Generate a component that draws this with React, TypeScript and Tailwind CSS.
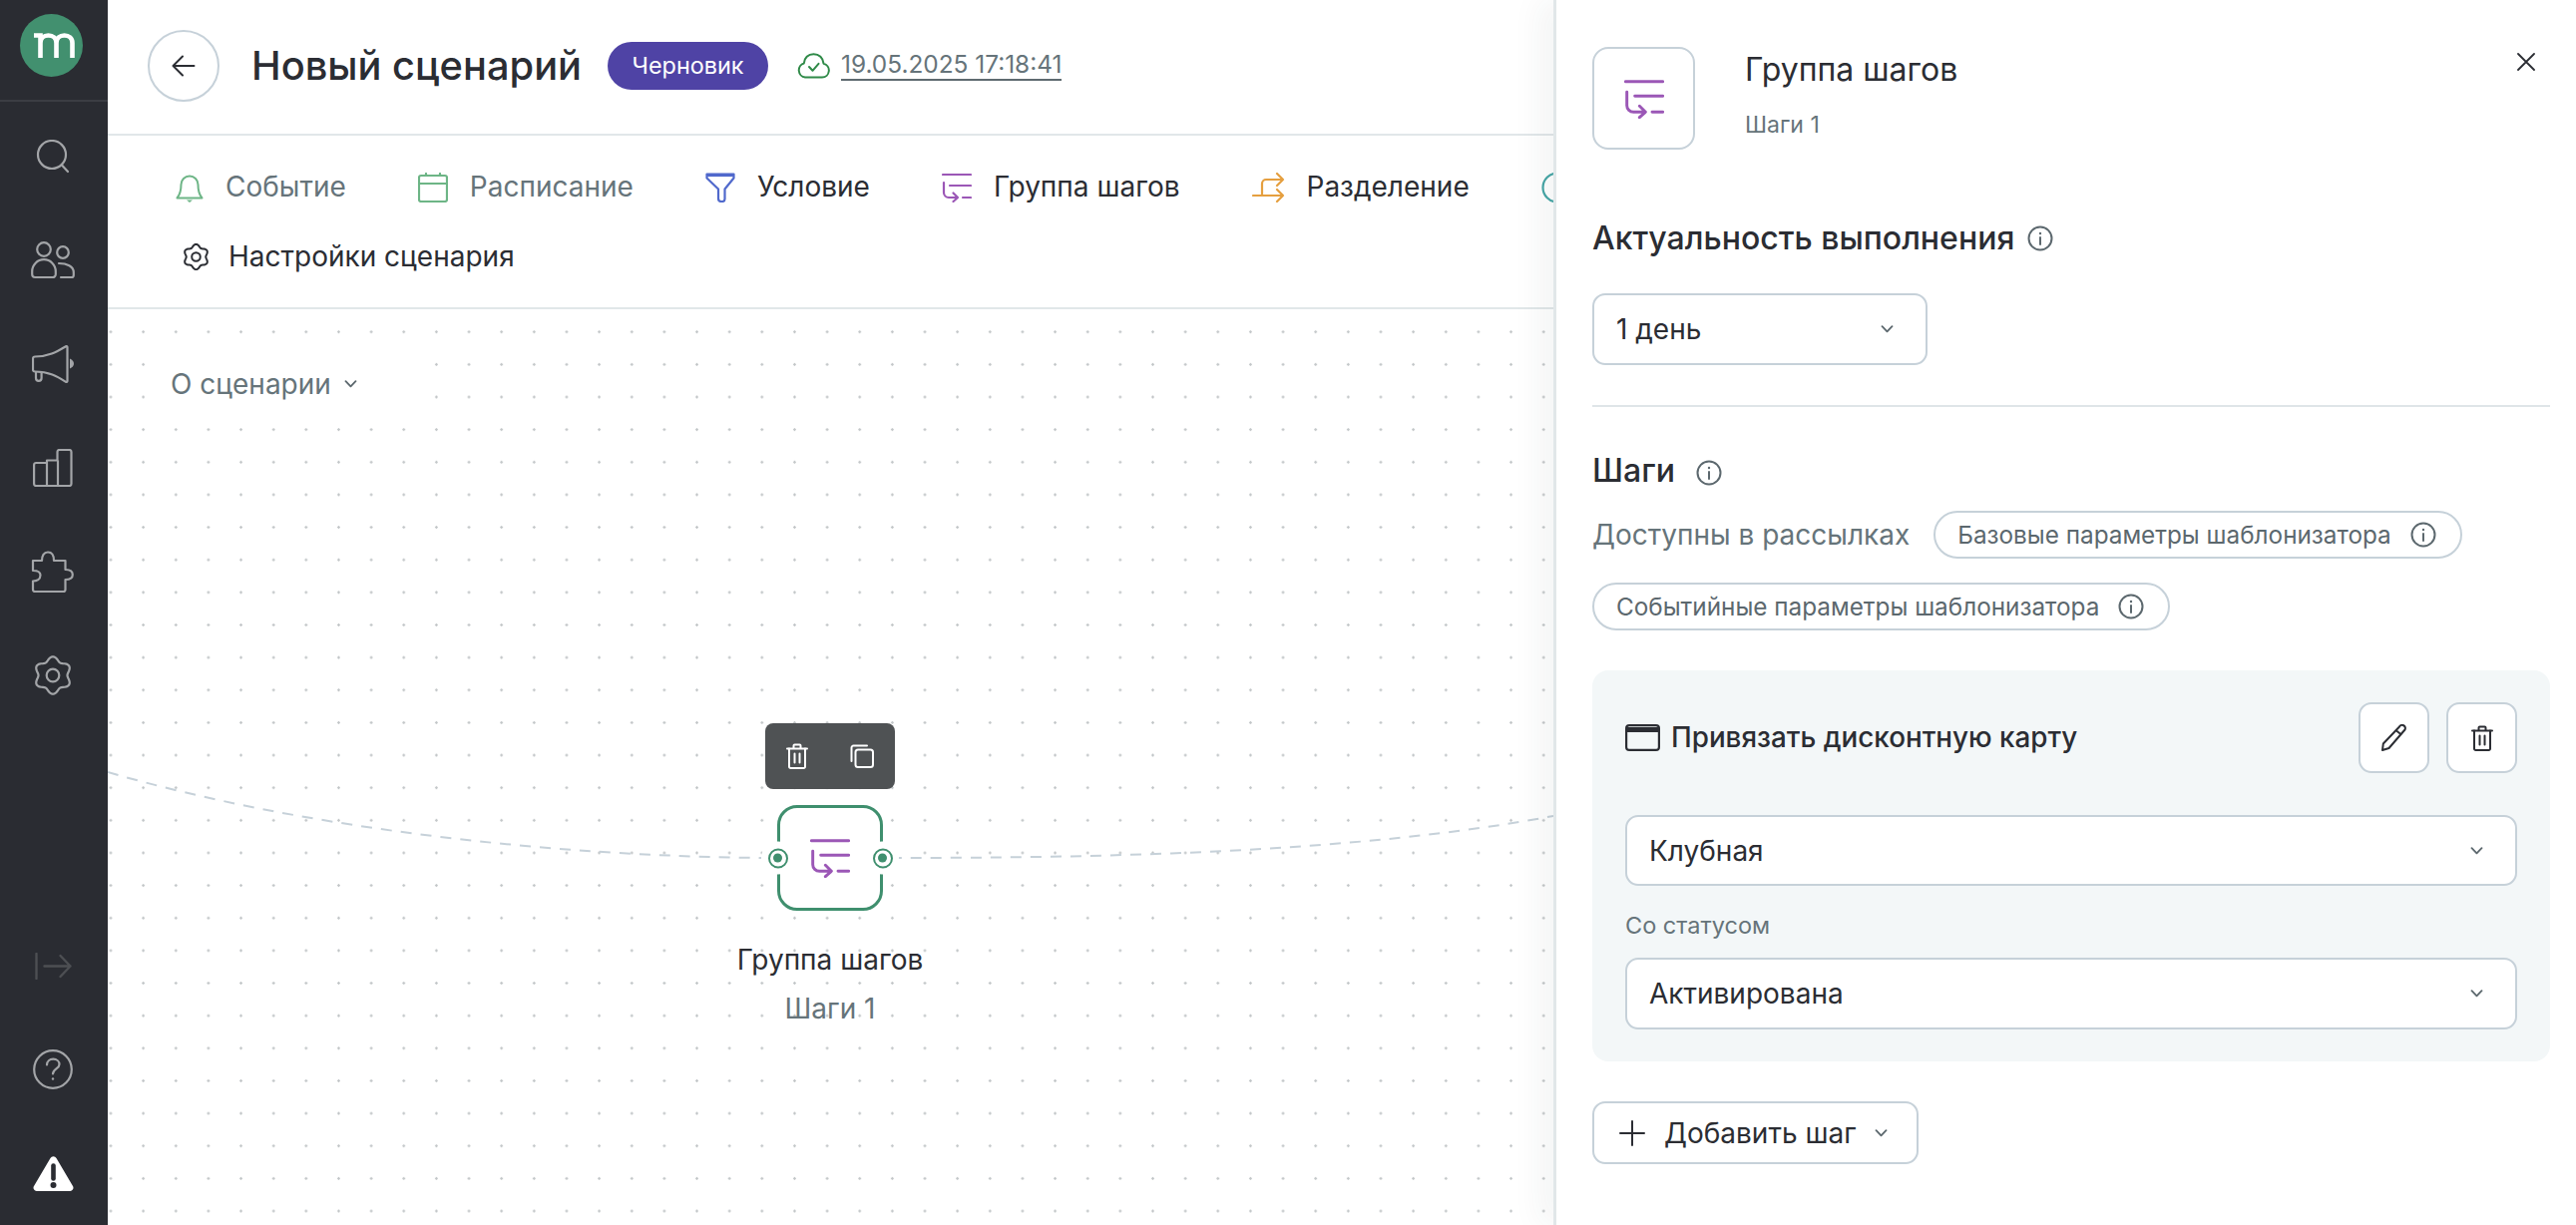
import type { ReactNode } from "react";

function gearPath(r: number, c: number, depth = 0.13) {
  let d = "";
  for (let i = 0; i < 72; i++) {
    const t = (i / 72) * Math.PI * 2;
    const rr = r * (1 + depth * Math.cos(6 * t));
    const x = c + rr * Math.sin(t);
    const y = c - rr * Math.cos(t);
    d += `${i === 0 ? "M" : "L"}${x.toFixed(2)} ${y.toFixed(2)}`;
  }
  return d + "Z";
}

function Gear({ size, sw, className }: { size: number; sw: number; className: string }) {
  return (
    <svg width={size} height={size} viewBox="0 0 38 38" fill="none" stroke="currentColor" strokeWidth={sw} className={className}>
      <path d={gearPath(15.8, 19)} strokeLinejoin="round" />
      <circle cx="19" cy="19" r="6" />
    </svg>
  );
}

function GroupIcon({ size }: { size: number }) {
  return (
    <svg width={size} height={size} viewBox="0 0 30 30" fill="none" stroke="#9b57b6" strokeWidth="2.2" strokeLinecap="round" strokeLinejoin="round">
      <path d="M1 2h28M8 13h21M21 25h8" />
      <path d="M2 10v10a5 5 0 0 0 5 5h9M11.5 20.5 16 25l-4.5 4" />
    </svg>
  );
}

function Info({ className = "" }: { className?: string }) {
  return (
    <svg width="26" height="26" viewBox="0 0 26 26" fill="none" stroke="#5c686e" strokeWidth="2" className={"shrink-0 " + className}>
      <circle cx="13" cy="13" r="11.5" />
      <path d="M13 12v7" strokeLinecap="round" />
      <circle cx="13" cy="8" r="1.2" fill="#5c686e" stroke="none" />
    </svg>
  );
}

function Chevron({ className = "" }: { className?: string }) {
  return (
    <svg width="13" height="8" viewBox="0 0 13 8" fill="none" stroke="#5c686e" strokeWidth="1.8" strokeLinecap="round" strokeLinejoin="round" className={"shrink-0 " + className}>
      <path d="M1.5 1.2 6.5 6.4l5-5.2" />
    </svg>
  );
}

function Trash({ color }: { color: string }) {
  return (
    <svg width="22" height="26" viewBox="0 0 22 26" fill="none" stroke={color} strokeWidth="2" strokeLinecap="round" strokeLinejoin="round">
      <path d="M1 5.5h20M7.5 5V2.5a1 1 0 0 1 1-1h5a1 1 0 0 1 1 1V5" />
      <path d="M3 5.5v18a1.5 1.5 0 0 0 1.5 1.5h13a1.5 1.5 0 0 0 1.5-1.5v-18M8.5 10.5v9M13.5 10.5v9" />
    </svg>
  );
}

function SidebarSlot({ children }: { children: ReactNode }) {
  return <div className="flex h-[104px] w-full shrink-0 items-center justify-center pr-[2px] text-[#a3a5a8]">{children}</div>;
}

function Sidebar() {
  return (
    <aside className="flex h-full w-[108px] shrink-0 flex-col bg-[#2a2c32]">
      <div className="flex h-[102px] shrink-0 items-start justify-center border-b-2 border-[#3b3d43] pr-[5px] pt-[14px]">
        <svg width="63" height="63" viewBox="0 0 63 63" fill="none">
          <circle cx="31.5" cy="31.5" r="31.5" fill="#42906f" />
          <path d="M14 21.5h6.5V44M20.5 29c0-4.5 3.5-7.5 8-7.5s8 3 8 7.500v15M36.5 29c0-4.5 3.5-7.5 8-7.5s8 3 8 7.500v15" stroke="#fff" strokeWidth="4.6" />
        </svg>
      </div>
      <div className="pt-[3px]">
        <SidebarSlot>
          <svg width="34" height="34" viewBox="0 0 34 34" fill="none" stroke="currentColor" strokeWidth="2.2" strokeLinecap="round">
            <circle cx="16" cy="15" r="14" />
            <path d="M26 25.5 32 32" />
          </svg>
        </SidebarSlot>
        <SidebarSlot>
          <svg width="44" height="38" viewBox="0 0 44 38" fill="none" stroke="currentColor" strokeWidth="2.2" strokeLinejoin="round" strokeLinecap="round">
            <circle cx="13" cy="8" r="6.8" />
            <circle cx="32" cy="11" r="5.8" />
            <path d="M1.2 33v-3a11.8 11.8 0 0 1 23.6 0v3a3 3 0 0 1-3 3H4.2a3 3 0 0 1-3-3Z" />
            <path d="M28 22c8 0 14.8 3 14.8 9v3a2 2 0 0 1-2 2H30" />
          </svg>
        </SidebarSlot>
        <SidebarSlot>
          <svg width="43" height="38" viewBox="0 0 43 38" fill="none" stroke="currentColor" strokeWidth="2.2" strokeLinejoin="round" strokeLinecap="round">
            <path d="M3 11.5c14 0 22-5 31-10.3a1 1 0 0 1 1.5.9v33.800a1 1 0 0 1-1.5.9C25 31 17 26.500 3 26.500a2 2 0 0 1-2-2v-11a2 2 0 0 1 2-2Z" />
            <path d="M4 27v6a2.8 2.8 0 0 0 5.600 0v-5" />
            <path d="M38 13.5c2.500 1 4 3 4 5s-1.500 4-4 5Z" fill="currentColor" stroke="none" />
          </svg>
        </SidebarSlot>
        <SidebarSlot>
          <svg width="40" height="38" viewBox="0 0 40 38" fill="none" stroke="currentColor" strokeWidth="2.2" strokeLinejoin="round">
            <path d="M1.1 35V16a2 2 0 0 1 2-2H14v-2.500h10.500V3a2 2 0 0 1 2-2h10a2 2 0 0 1 2 2v32a2 2 0 0 1-2 2H3.100a2 2 0 0 1-2-2ZM14 14v23M25 11.500V37" />
          </svg>
        </SidebarSlot>
        <SidebarSlot>
          <svg width="44" height="43" viewBox="0 0 44 43" fill="none" stroke="currentColor" strokeWidth="2.2" strokeLinejoin="round">
            <path d="M2 10h9c0-5 2-8.500 6-8.500s6 3.500 6 8.500h11.500v9c4 0 7.300 1 7.300 5s-3.300 5-7.300 5v10a2 2 0 0 1-2 2H4a2 2 0 0 1-2-2v-8.500c4 0 7.500-2 7.500-6S6 20 2 20Z" />
          </svg>
        </SidebarSlot>
        <SidebarSlot>
          <Gear size={40} sw={2.1} className="" />
        </SidebarSlot>
      </div>
      <div className="mt-auto">
        <SidebarSlot>
          <svg width="37" height="27" viewBox="0 0 37 27" fill="none" stroke="#4d4f53" strokeWidth="2.4" strokeLinecap="round" strokeLinejoin="round">
            <path d="M1.5 1v25M9.5 13.5h26M25.5 3l10 10.5L25.5 24" />
          </svg>
        </SidebarSlot>
        <SidebarSlot>
          <svg width="40" height="40" viewBox="0 0 40 40" fill="none" stroke="currentColor" strokeWidth="2.2" strokeLinecap="round">
            <circle cx="20" cy="20" r="18.8" />
            <path d="M14 15.500c0-3.500 2.800-5.800 6.300-5.800s6.200 2.300 6.200 5.300c0 4.500-6.500 4.500-6.500 9.500" />
            <circle cx="20" cy="29.500" r="1.2" fill="currentColor" stroke="none" />
          </svg>
        </SidebarSlot>
        <SidebarSlot>
          <svg width="41" height="35" viewBox="0 0 41 35" fill="none">
            <path d="M17.500 2 1 30a3.300 3.300 0 0 0 2.800 5h33.400a3.300 3.300 0 0 0 2.800-5L23.500 2a3.500 3.500 0 0 0-6 0Z" fill="#fff" />
            <path d="M20.500 9.500v13" stroke="#2a2c32" strokeWidth="4.6" strokeLinecap="round" />
            <circle cx="20.500" cy="29" r="3" fill="#2a2c32" />
          </svg>
        </SidebarSlot>
      </div>
    </aside>
  );
}

function TopBar() {
  return (
    <header className="flex h-[136px] shrink-0 items-center border-b-2 border-[#e1e7e9] pb-[3px] pl-[40px]">
      <button className="flex h-[72px] w-[72px] shrink-0 items-center justify-center rounded-full border-2 border-[#c6d1d9] bg-white">
        <svg width="24" height="22" viewBox="0 0 24 22" fill="none" stroke="#2b2d33" strokeWidth="2" strokeLinecap="round" strokeLinejoin="round">
          <path d="M22.5 11h-21M11 1.500 1.500 11l9.500 9.500" />
        </svg>
      </button>
      <h1 className="ml-[32px] whitespace-nowrap text-[39.8px] font-medium leading-none text-[#2b2d33]">Новый сценарий</h1>
      <span className="ml-[26px] flex h-[48px] w-[161px] shrink-0 items-center justify-center rounded-full bg-[#4f43a5] text-[23.4px] font-normal text-white">Черновик</span>
      <svg width="33" height="26" viewBox="0 0 33 26" fill="none" stroke="#2f8a48" strokeWidth="2" strokeLinejoin="round" strokeLinecap="round" className="ml-[29px] shrink-0">
        <path d="M8 24.500h17a7 7 0 0 0 1.500-13.800C26 5 22 1.200 16.500 1.200S7.200 5 6.800 10.500A7.200 7.200 0 0 0 8 24.500Z" />
        <path d="m12 14 3.500 3.800 6-7" />
      </svg>
      <span className="ml-[11px] border-b-2 border-[#5f6b70] pb-[1px] text-[24.4px] leading-[28px] text-[#66747a]">19.05.2025 17:18:41</span>
    </header>
  );
}

function Tab({ icon, label, muted }: { icon: ReactNode; label: string; muted?: boolean }) {
  return (
    <div className={"flex h-[30px] shrink-0 items-center gap-[22px] whitespace-nowrap text-[28px] " + (muted ? "text-[#66747a]" : "text-[#2b2d33]")}>
      {icon}
      <span className="-mt-[2px]">{label}</span>
    </div>
  );
}

function Toolbox() {
  return (
    <div className="h-[174px] shrink-0 border-b-2 border-[#e1e7e9] pl-[68px] pt-[36px]">
      <div className="flex items-center gap-[72px]">
        <Tab
          muted
          label="Событие"
          icon={
            <svg width="28" height="30" viewBox="0 0 28 30" fill="none" stroke="#6db586" strokeWidth="2" strokeLinejoin="round">
              <path d="M1.500 25.500c3.500-4 4-8 4-13.500a8.500 8.500 0 0 1 17 0c0 5.500.5 9.500 4 13.500Z" />
              <path d="M11 27.500h6l-3 2.500Z" fill="#6db586" stroke="none" />
            </svg>
          }
        />
        <Tab
          muted
          label="Расписание"
          icon={
            <svg width="30" height="30" viewBox="0 0 30 30" fill="none" stroke="#6db586" strokeWidth="2.2" strokeLinecap="round">
              <rect x="1" y="3" width="28" height="26" rx="2" />
              <path d="M1 11h28M8 1v2M22 1v2" />
            </svg>
          }
        />
        <Tab
          label="Условие"
          icon={
            <svg width="30" height="30" viewBox="0 0 30 30" fill="none" stroke="#5069cc" strokeWidth="2.2" strokeLinejoin="round">
              <path d="M1.500 1.500h27v4L19.500 16.500V26.500a2.500 2.500 0 0 1-2.500 2.500h-1a3 3 0 0 1-3-3V16.500L1.500 5.500Z" />
              <path d="M1.500 3h27" />
            </svg>
          }
        />
        <Tab label="Группа шагов" icon={<GroupIcon size={30} />} />
        <Tab
          label="Разделение"
          icon={
            <svg width="33" height="30" viewBox="0 0 33 30" fill="none" stroke="#e59f3f" strokeWidth="2.2" strokeLinecap="round" strokeLinejoin="round">
              <path d="M1 23h30M25 17l6 6-6 6" />
              <path d="M10 23V11a4 4 0 0 1 4-4h17M25 1l6 6-6 6" />
            </svg>
          }
        />
        <svg width="32" height="32" viewBox="0 0 32 32" fill="none" stroke="#46a6a6" strokeWidth="2.2" className="shrink-0">
          <circle cx="16" cy="16" r="14.500" />
        </svg>
      </div>
      <div className="ml-[7px] mt-[38px]">
        <div className="flex h-[30px] items-center gap-[19px] whitespace-nowrap text-[28px] text-[#2b2d33]">
          <Gear size={27} sw={2.8} className="text-[#2b2d33]" />
          <span>Настройки сценария</span>
        </div>
      </div>
    </div>
  );
}

function Port({ side }: { side: "left" | "right" }) {
  return (
    <span className={"absolute top-1/2 flex h-[33px] w-[33px] -translate-y-1/2 items-center justify-center rounded-full bg-white " + (side === "left" ? "left-[-19px]" : "right-[-19px]")}>
      <span className="flex h-[20px] w-[20px] items-center justify-center rounded-full border-2 border-[#3f8f6e] bg-white">
        <span className="h-[9px] w-[9px] rounded-full bg-[#3f8f6e]" />
      </span>
    </span>
  );
}

function Canvas() {
  return (
    <div className="relative min-h-0 flex-1 overflow-hidden bg-white bg-[radial-gradient(circle,#c2c6c8_1px,transparent_1.5px)] bg-[length:32.65px_32.65px] bg-[position:-13.33px_6.4px]">
      <svg className="absolute inset-0" width="1449" height="918" fill="none" stroke="#c6d1d9" strokeWidth="2" strokeDasharray="11 9">
        <path d="M0 464C200 522 450 548 655 550" />
        <path d="M785 550C1000 550 1250 545 1449 508" />
      </svg>

      <button className="absolute left-[42px] top-[35px] flex h-[80px] w-[280px] items-center gap-[13px] bg-white pl-[21px] text-[28px] text-[#66747a]">
        О сценарии
        <Chevron />
      </button>

      <div className="absolute left-[574px] top-[415px] flex w-[300px] flex-col items-center">
        <div className="flex h-[66px] w-[130px] items-center justify-between rounded-[8px] bg-[#4f5254] px-[21px]">
          <Trash color="#fff" />
          <svg width="24" height="24" viewBox="0 0 24 24" fill="none" stroke="#fff" strokeWidth="2" strokeLinejoin="round" strokeLinecap="round">
            <rect x="5.500" y="5.500" width="17.500" height="17.500" rx="2.500" />
            <path d="M1.500 17V3.500a2 2 0 0 1 2-2H17" />
          </svg>
        </div>
        <div className="relative mt-[16px] flex h-[106px] w-[106px] items-center justify-center rounded-[20px] border-[3px] border-[#3f8f6e] bg-white">
          <Port side="left" />
          <GroupIcon size={40} />
          <Port side="right" />
        </div>
        <div className="mt-[31px] text-[28px] leading-[36px] text-[#2b2d33]">Группа шагов</div>
        <div className="mt-[13px] text-[28px] leading-[36px] text-[#66747a]">Шаги 1</div>
      </div>
    </div>
  );
}

function Select({ label, className }: { label: string; className: string }) {
  return (
    <div className={"flex shrink-0 items-center justify-between rounded-[13px] border-2 border-[#c6d1d9] bg-white pl-[22px] pr-[32px] text-[28px] text-[#2b2d33] " + className}>
      <span>{label}</span>
      <Chevron />
    </div>
  );
}

function Chip({ label }: { label: string }) {
  return (
    <span className="flex h-[48px] items-center gap-[19px] whitespace-nowrap rounded-full border-2 border-[#c6d1d9] pl-[22px] pr-[24px] text-[24.3px] text-[#5c686e]">
      {label}
      <Info />
    </span>
  );
}

function SquareButton({ children }: { children: ReactNode }) {
  return <button className="flex h-[71px] w-[71px] items-center justify-center rounded-[13px] border-2 border-[#c6d1d9] bg-white">{children}</button>;
}

function Panel() {
  return (
    <aside className="relative z-10 h-full w-[1025px] shrink-0 border-l-[3px] border-[#e1e7e9] bg-white pl-[36px] pr-[26px] pt-[47px] shadow-[-14px_0_28px_rgba(40,50,60,0.05)]">
      <div className="flex">
        <div className="flex h-[103px] w-[103px] shrink-0 items-center justify-center rounded-[16px] border-2 border-[#c6d1d9]">
          <GroupIcon size={40} />
        </div>
        <div className="ml-[50px] pt-[3px]">
          <div className="text-[32px] font-normal leading-[40px] text-[#2b2d33]">Группа шагов</div>
          <div className="mt-[19px] text-[23px] leading-[32px] text-[#66747a]">Шаги 1</div>
        </div>
        <svg width="18" height="18" viewBox="0 0 18 18" fill="none" stroke="#2b2d33" strokeWidth="1.8" strokeLinecap="round" className="ml-auto mr-[15px] mt-[6px]">
          <path d="M1 1l16 16M17 1 1 17" />
        </svg>
      </div>

      <div className="mt-[69px] flex h-[40px] items-center gap-[13px] text-[32px] font-medium text-[#2b2d33]">
        Актуальность выполнения
        <Info />
      </div>
      <Select label="1 день" className="mt-[35px] h-[72px] w-[336px]" />
      <div className="mt-[40px] h-[2px] bg-[#dfe5e8]" />

      <div className="mt-[44px] flex h-[40px] items-center gap-[21px] text-[32px] font-medium text-[#2b2d33]">
        Шаги
        <Info className="mt-[4px]" />
      </div>
      <div className="mt-[20px] flex flex-wrap items-center gap-x-[24px] gap-y-[24px]">
        <span className="text-[28px] text-[#66747a]">Доступны в рассылках</span>
        <Chip label="Базовые параметры шаблонизатора" />
        <Chip label="Событийные параметры шаблонизатора" />
      </div>

      <div className="mt-[40px] rounded-[16px] bg-[#f3f7f8] px-[33px] py-[32px]">
        <div className="flex items-center justify-between">
          <div className="flex items-center gap-[11px] text-[27.8px] font-medium text-[#2b2d33]">
            <svg width="35" height="27" viewBox="0 0 35 27" fill="none" stroke="#2b2d33" strokeWidth="2.2">
              <rect x="1.1" y="1.1" width="32.8" height="24.8" rx="3" />
              <path d="M1 5.500h33" strokeWidth="5" />
            </svg>
            Привязать дисконтную карту
          </div>
          <div className="flex gap-[17px]">
            <SquareButton>
              <svg width="27" height="27" viewBox="0 0 27 27" fill="none" stroke="#2b2d33" strokeWidth="2" strokeLinejoin="round">
                <path d="M19 2.500a3 3 0 0 1 5.500 3L8.500 24 2 26l.8-6.500Z" />
                <path d="m16 6.500 5 4" />
              </svg>
            </SquareButton>
            <SquareButton>
              <Trash color="#2b2d33" />
            </SquareButton>
          </div>
        </div>
        <Select label="Клубная" className="mt-[42px] h-[71px] w-full" />
        <div className="mt-[24px] text-[23.5px] leading-[32px] text-[#66747a]">Со статусом</div>
        <Select label="Активирована" className="mt-[16px] h-[72px] w-full" />
      </div>

      <button className="mt-[40px] flex h-[63px] w-[327px] items-center rounded-[13px] border-2 border-[#c6d1d9] bg-white pl-[25px] text-[28px] text-[#2b2d33]">
        <svg width="26" height="26" viewBox="0 0 26 26" fill="none" stroke="#2b2d33" strokeWidth="2" strokeLinecap="round" className="shrink-0">
          <path d="M13 1v24M1 13h24" />
        </svg>
        <span className="ml-[19px]">Добавить шаг</span>
        <Chevron className="ml-[19px]" />
      </button>
    </aside>
  );
}

export default function App() {
  return (
    <div className="flex h-[1228px] w-[2582px] overflow-hidden bg-white font-[family-name:Inter,sans-serif]">
      <Sidebar />
      <main className="flex h-full min-w-0 flex-1 flex-col overflow-hidden">
        <TopBar />
        <Toolbox />
        <Canvas />
      </main>
      <Panel />
    </div>
  );
}
